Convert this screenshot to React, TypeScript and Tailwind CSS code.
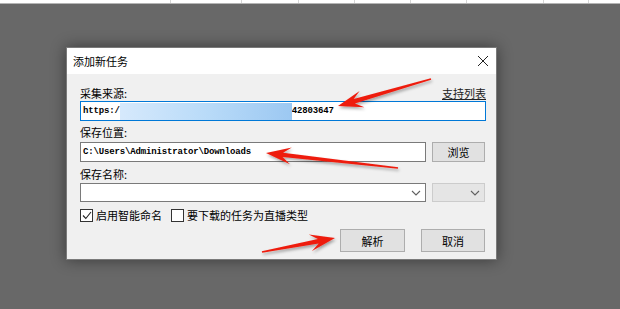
import React from "react";

type Pt = [number, number];

function arrowPoints(tail: Pt, tip: Pt) {
  const dx = tip[0] - tail[0];
  const dy = tip[1] - tail[1];
  const len = Math.hypot(dx, dy);
  const ux = dx / len;
  const uy = dy / len;
  const px = -uy;
  const py = ux;
  const headLen = 25;
  const notch = 17;
  const halfW = 8.5;
  const shaftTail = 0.8;
  const shaftHead = 2.2;
  const bx = tip[0] - ux * headLen;
  const by = tip[1] - uy * headLen;
  const nx = tip[0] - ux * notch;
  const ny = tip[1] - uy * notch;
  const pts: Pt[] = [
    [tail[0] + px * shaftTail, tail[1] + py * shaftTail],
    [nx + px * shaftHead, ny + py * shaftHead],
    [bx + px * halfW, by + py * halfW],
    [tip[0], tip[1]],
    [bx - px * halfW, by - py * halfW],
    [nx - px * shaftHead, ny - py * shaftHead],
    [tail[0] - px * shaftTail, tail[1] - py * shaftTail],
  ];
  return pts.map((p) => `${p[0].toFixed(1)},${p[1].toFixed(1)}`).join(" ");
}

const arrows: [Pt, Pt][] = [
  [[431, 79], [338, 106]],
  [[398, 168], [266, 153]],
  [[262, 252], [335, 238]],
];

const cjk = { fontFamily: '"Noto Sans CJK SC", "Noto Sans", sans-serif' };
const mono = { fontFamily: '"Liberation Mono", "DejaVu Sans Mono", monospace' };

function Chevron() {
  return (
    <svg width="10" height="6" viewBox="0 0 10 6" className="shrink-0">
      <path d="M1 1 L5 5 L9 1" fill="none" stroke="#606060" strokeWidth="1.1" />
    </svg>
  );
}

export default function App() {
  const lines = [170, 241, 298, 354, 410, 466, 543, 588];
  return (
    <div className="relative w-[620px] h-[309px] overflow-hidden bg-[#686868]" style={cjk}>
      <div className="relative h-[3px] bg-white border-b border-[#b4b4b4] box-content">
        {lines.map((x) => (
          <div key={x} className="absolute top-0 h-[3px] w-px bg-[#d6d6d6]" style={{ left: x }} />
        ))}
      </div>
      <div className="ml-[66px] mt-[43px] w-[431px] h-[213px] border border-[#7a7a7a] bg-[#f0f0f0] shadow-[0_0_14px_rgba(0,0,0,0.45)] flex flex-col">
        <div className="h-[26px] bg-white flex items-center justify-between pl-[6px] pr-[6px] shrink-0">
          <span className="text-[11px] leading-[14px] text-black">添加新任务</span>
          <svg width="12" height="12" viewBox="0 0 12 12" className="mr-[1px]">
            <path d="M1 1 L11 11 M11 1 L1 11" stroke="#222" strokeWidth="1" fill="none" />
          </svg>
        </div>
        <div className="flex flex-col pl-[13px] pr-[10px] pt-[12px] text-[11px] leading-[14px] text-black">
          <div className="flex justify-between items-end h-[14px]">
            <span>采集来源:</span>
            <span className="underline text-[#222] underline-offset-1">支持列表</span>
          </div>
          <div className="mt-[1px] h-[20px] w-[406px] bg-white border border-[#0078d7] flex items-center pl-[2px] text-[9px] font-bold tracking-[-0.15px]" style={mono}>
            <span>https:/</span>
            <span className="h-[17px] w-[172px] bg-[linear-gradient(90deg,#d6e9fc,#b9dbf8_50%,#9cc8f2)] blur-[0.5px]" />
            <span>42803647</span>
          </div>
          <div className="mt-[4px] h-[14px]">保存位置:</div>
          <div className="mt-[3px] flex gap-[6px]">
            <div className="h-[20px] w-[346px] bg-white border border-[#7a7a7a] flex items-center pl-[2px] text-[9px] font-bold tracking-[-0.15px]" style={mono}>
              C:\Users\Administrator\Downloads
            </div>
            <div className="h-[20px] w-[53px] bg-[#e1e1e1] border border-[#adadad] flex items-center justify-center">
              浏览
            </div>
          </div>
          <div className="mt-[5px] h-[14px]">保存名称:</div>
          <div className="mt-[2px] flex gap-[6px]">
            <div className="h-[19px] w-[346px] bg-white border border-[#7a7a7a] flex items-center justify-end pr-[4px]">
              <Chevron />
            </div>
            <div className="h-[19px] w-[53px] bg-[#e5e5e5] border border-[#cccccc] flex items-center justify-end pr-[4px]">
              <Chevron />
            </div>
          </div>
          <div className="mt-[6px] flex items-center h-[14px]">
            <div className="w-[13px] h-[13px] border border-[#333] bg-white flex items-center justify-center">
              <svg width="10" height="9" viewBox="0 0 10 9">
                <path d="M1 4.5 L3.8 7.5 L9 1" fill="none" stroke="#222" strokeWidth="1.1" />
              </svg>
            </div>
            <span className="ml-[3px]">启用智能命名</span>
            <div className="ml-[9px] w-[13px] h-[13px] border border-[#333] bg-white" />
            <span className="ml-[3px]">要下载的任务为直播类型</span>
          </div>
          <div className="mt-[7px] flex justify-end gap-[16px] pr-[1px]">
            <div className="h-[23px] w-[65px] bg-[#e1e1e1] border border-[#adadad] flex items-center justify-center">
              解析
            </div>
            <div className="h-[23px] w-[64px] bg-[#e1e1e1] border border-[#adadad] flex items-center justify-center">
              取消
            </div>
          </div>
        </div>
      </div>
      <svg className="absolute inset-0 pointer-events-none" width="620" height="309">
        <defs>
          <filter id="sh" x="-20%" y="-50%" width="140%" height="200%">
            <feDropShadow dx="1" dy="2" stdDeviation="1.6" floodColor="#000" floodOpacity="0.35" />
          </filter>
        </defs>
        {arrows.map(([t, h], i) => (
          <polygon key={i} points={arrowPoints(t, h)} fill="#ee1c0e" filter="url(#sh)" />
        ))}
      </svg>
    </div>
  );
}
